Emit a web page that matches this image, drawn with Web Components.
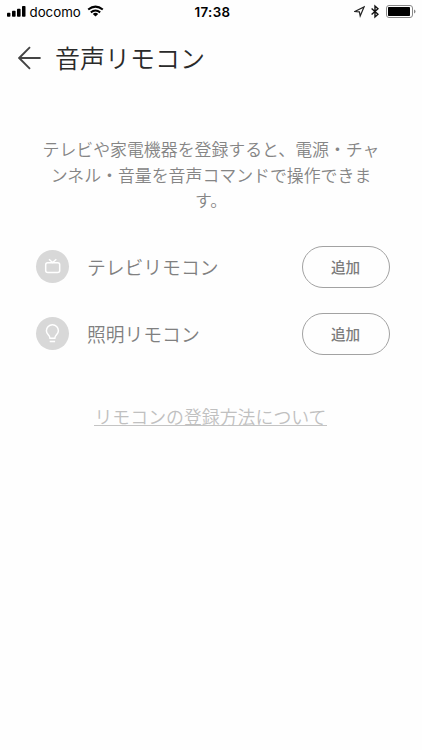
<!DOCTYPE html>
<html lang="ja">
<head>
<meta charset="utf-8">
<title>音声リモコン</title>
<style>
html,body{margin:0;height:100%;background:#fefefe}
</style>
</head>
<body>
<remote-screen></remote-screen>
<script>
const define = (name, html) => customElements.define(name, class extends HTMLElement {
  constructor() {
    super();
    this.attachShadow({ mode: 'open' }).innerHTML = html;
  }
});

define('status-bar', `
<style>
:host{display:grid;grid-template-columns:1fr auto 1fr;align-items:center;height:24px;padding:0 6px 0 7px;box-sizing:border-box;color:#000;font-family:Inter,"Liberation Sans",sans-serif}
div{display:flex;align-items:center}
svg{display:block;flex:none}
.carrier{font-size:13.3px;line-height:24px;margin:0 6px 0 3.500px}
.time{font-size:13.3px;font-weight:600;line-height:24px;letter-spacing:.4px;padding-left:2px}
.right{justify-content:flex-end}
</style>
<div>
  <svg width="19" height="24" viewBox="0 0 19 24"><rect x="0" y="12.7" width="3.4" height="4" rx=".8"/><rect x="5" y="10.8" width="3.6" height="5.9" rx=".8"/><rect x="10" y="8.7" width="3.6" height="8" rx=".8"/><rect x="15" y="6" width="3.5" height="10.7" rx=".8"/></svg>
  <span class="carrier">docomo</span>
  <svg width="17" height="24" viewBox="0 0 17 24" fill="none" stroke="#000" stroke-width="2"><path d="M1.200 9.600Q8.500 3.600 15.800 9.600"/><path d="M3.800 12.400Q8.500 8.600 13.200 12.400"/><path d="M8.500 16.600 5.800 13.900Q8.500 11.700 11.200 13.900Z" fill="#000" stroke="none"/></svg>
</div>
<span class="time">17:38</span>
<div class="right">
  <svg width="11" height="24" viewBox="0 0 11 24" fill="none" stroke="#222" stroke-width="1.200"><path d="M.8 11.500 10 7 6.200 16 5.400 11.900Z"/></svg>
  <svg width="8" height="24" viewBox="0 0 8 24" fill="none" stroke="#111" stroke-width="1.400" style="margin:0 7px 0 6px"><path d="M.6 8.600 7 14.300 4 17V6L7 8.700.6 14.400"/></svg>
  <svg width="30" height="24" viewBox="0 0 30 24"><rect x=".5" y="5.500" width="26" height="12" rx="2.500" fill="none" stroke="#888"/><rect x="2" y="7" width="22" height="9" rx=".7"/><path d="M28 9.500q1.500.4 1.500 2t-1.500 2z" fill="#888"/></svg>
</div>`);

define('page-header', `
<style>
:host{display:flex;align-items:center;height:68px;padding-left:18px;color:#2a2a2a}
svg{display:block;margin-right:14px}
h1{margin:0;padding-bottom:2px;font-size:25px;line-height:36px;font-weight:350}
</style>
<svg width="23" height="24" viewBox="0 0 23 24" fill="none" stroke="#444" stroke-width="1.900"><path d="M22.600 12H1.300M12 1.200 1.200 12 12 22.800"/></svg>
<h1><slot></slot></h1>`);

define('pill-button', `
<style>
:host{display:block}
button{display:flex;align-items:center;justify-content:center;width:88px;height:42px;box-sizing:border-box;border:1px solid #a2a2a2;border-radius:21px;background:none;padding:0 1px 0 0;color:#7c7c7c;font:500 14.600px/22px "Noto Sans CJK JP",sans-serif}
</style>
<button><slot></slot></button>`);

define('remote-row', `
<style>
:host{display:flex;align-items:center;height:42px}
.icon{width:33px;height:33px;border-radius:50%;background:#d8d8d8;margin-right:18px;flex:none}
.name{flex:1;font-size:18.800px;line-height:28px;font-weight:350;color:#808080}
::slotted(svg){display:block}
</style>
<div class="icon"><slot name="icon"></slot></div>
<span class="name"><slot></slot></span>
<pill-button>追加</pill-button>`);

define('remote-screen', `
<style>
:host{display:block;width:422px;height:750px;box-sizing:border-box;overflow:hidden;background:#fefefe;font-family:"Noto Sans CJK JP",sans-serif}
p{margin:44px 36px 0;text-align:center;font-size:16.900px;line-height:25.600px;font-weight:350;color:#858585}
section{display:flex;flex-direction:column;gap:25px;margin-top:33px;padding:0 32px 0 36px}
footer{display:flex;justify-content:center;margin-top:48px;padding-right:1px}
a{font-size:17.900px;line-height:26px;font-weight:350;color:#c0c0c0;border-bottom:1px solid #c4c4c4;height:22px}
</style>
<status-bar></status-bar>
<page-header>音声リモコン</page-header>
<p>テレビや家電機器を登録すると、電源・チャンネル・音量を音声コマンドで操作できます。</p>
<section>
  <remote-row>
    <svg slot="icon" width="33" height="33" viewBox="0 0 33 33" fill="none" stroke="#fff" stroke-width="1.500"><rect x="9.700" y="12.700" width="14" height="9.700" rx="2"/><path d="M13 9.200 16.600 12.500 20.300 9.200"/></svg>テレビリモコン
  </remote-row>
  <remote-row>
    <svg slot="icon" width="33" height="33" viewBox="0 0 33 33" fill="none" stroke="#fff" stroke-width="1.500"><path d="M14 21.300C14 18 10.400 17.500 10.400 13.800A6 6 0 0 1 22.400 13.800C22.400 17.500 18.800 18 18.800 21.300ZM13.700 24.400H19.100"/></svg>照明リモコン
  </remote-row>
</section>
<footer><a>リモコンの登録方法について</a></footer>`);
</script>
</body>
</html>
